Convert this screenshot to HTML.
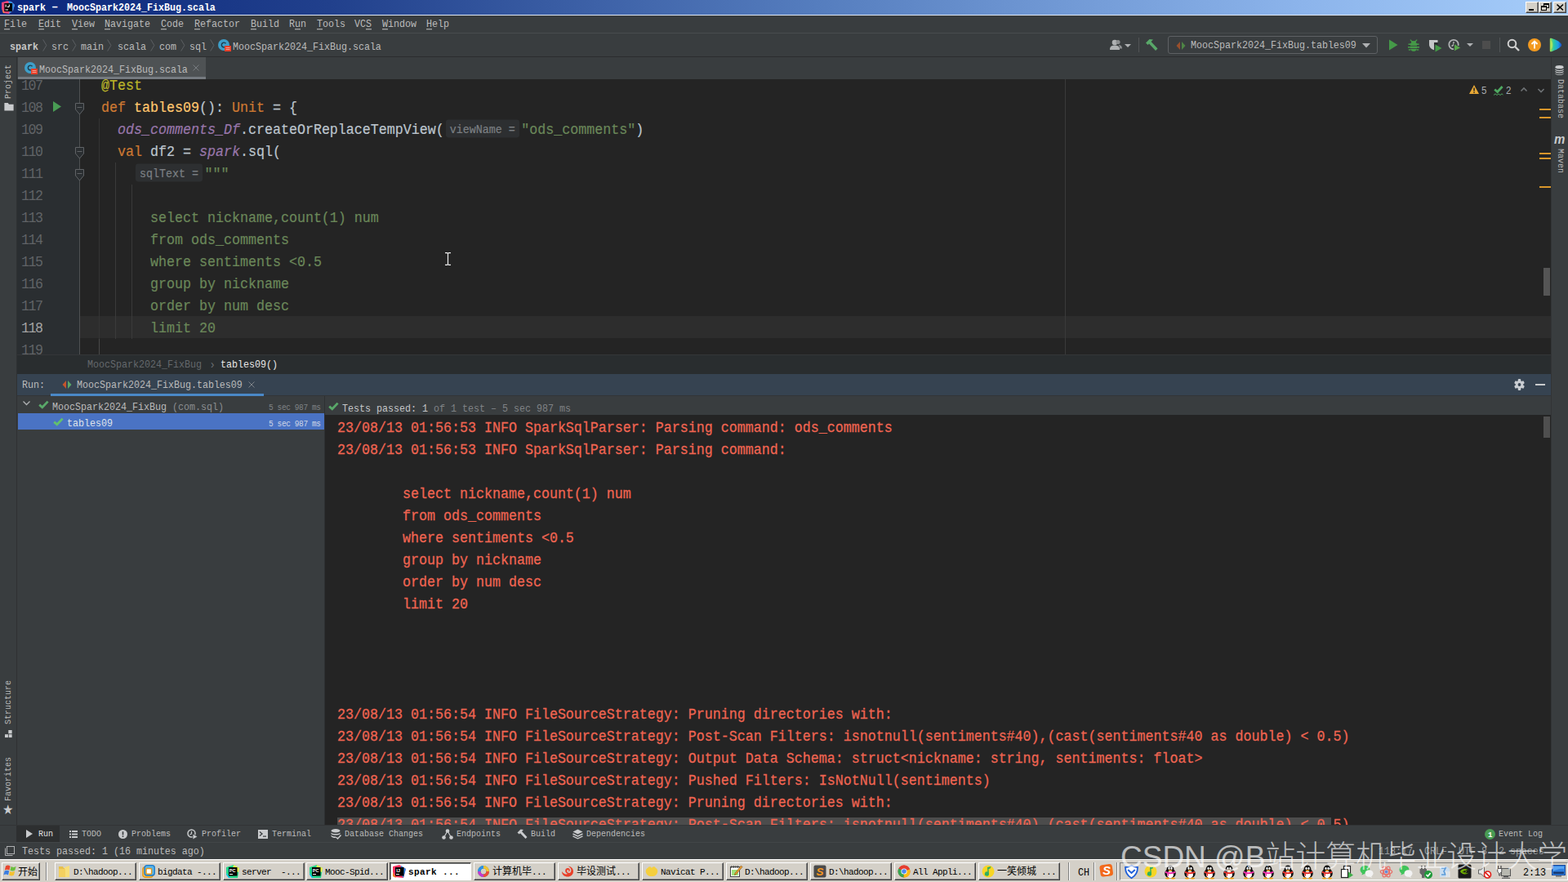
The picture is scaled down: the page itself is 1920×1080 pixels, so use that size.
<!DOCTYPE html><html><head><meta charset="utf-8"><title>spark - MoocSpark2024_FixBug.scala</title><style>
*{box-sizing:border-box;margin:0;padding:0}
html,body{width:1920px;height:1080px;overflow:hidden;background:#393d3f}
body{position:relative;font-family:"Liberation Mono","Noto Sans CJK SC",monospace;font-size:11.67px;color:#bbbbbb;line-height:1}
.a{position:absolute;white-space:pre}
.u{font-size:11.67px;line-height:14px;height:14px;color:#bbbbbb;transform:translateY(1px) scaleY(1.1);transform-origin:0 10px}
.c{-webkit-text-stroke:0.2px;font-size:16.67px;line-height:27px;height:27px;color:#bcc4cd;letter-spacing:0;transform:scaleY(1.1);transform-origin:0 18px}
.ln{font-size:16.67px;line-height:27px;height:27px;color:#606366;letter-spacing:-1.5px;transform:scaleY(1.1);transform-origin:0 18px}
.k{color:#cc7832}.f{color:#ffc66d}.an{color:#bbb529}.s{color:#6a8759}.p{color:#9876aa;font-style:italic}
.r{-webkit-text-stroke:0.25px;font-size:16.67px;line-height:27px;height:27px;color:#f06552;transform:scaleY(1.1);transform-origin:0 18px}
.hint{background:#2d2f31;color:#7b7f83;font-size:13.33px;border-radius:3px;display:inline-block;height:20px;line-height:24.5px;vertical-align:top;margin-top:2px;padding:0 5px;overflow:hidden}
.tb{position:absolute;top:1056px;height:22px;width:100px;background:#d4d0c8;border:1px solid;border-color:#fff #404040 #404040 #fff;box-shadow:inset -1px -1px 0 #808080;color:#000;font-size:11px;letter-spacing:-0.6px;line-height:20px;padding-top:1px;padding-left:22px;white-space:pre;overflow:hidden}
.tb.on{letter-spacing:0.4px;background:#fff;border-color:#404040 #fff #fff #404040;box-shadow:inset 1px 1px 0 #808080;font-weight:bold}
.ic{position:absolute;left:3px;top:3px;width:15px;height:15px;border-radius:2px}
svg{position:absolute;overflow:visible}
u{text-decoration:underline;text-underline-offset:2px}
</style></head><body>
<div class="a" style="left:0px;top:0px;width:1920px;height:18px;background:linear-gradient(90deg,#0a267c 0%,#21408c 21%,#557dbe 52%,#8cb4eb 83%,#a6cdfa 100%);"></div>
<div class="a" style="left:0px;top:18px;width:1920px;height:1px;background:#dfe8f5;"></div>
<div class="a u" style="left:21px;top:2px;color:#fff;font-weight:bold;">spark</div>
<div class="a u" style="left:63px;top:0px;color:#fff;font-weight:bold;font-size:14px">–</div>
<div class="a u" style="left:82px;top:2px;color:#fff;font-weight:bold;">MoocSpark2024_FixBug.scala</div>
<svg class="a" style="left:2px;top:1px" width="16" height="16" viewBox="0 0 16 16"><path d="M0 2 L7 0 L12 1 L16 5 L14 12 L9 16 L2 15 L0 9Z" fill="#e8457a"/><path d="M8 0 L12 1 L16 5 L14 12 L9 16 L11 8Z" fill="#2b8fe8"/><path d="M0 9 L4 15 L2 15Z" fill="#f58a3a"/><rect x="3.3" y="3" width="9.8" height="10" fill="#000"/><rect x="4.5" y="10.5" width="3.5" height="1" fill="#fff"/><rect x="4.6" y="4.5" width="1.1" height="3.2" fill="#fff"/><path d="M7 7 C8 8 9.3 7.6 9.3 6.5 L9.3 4.5" fill="none" stroke="#fff" stroke-width="1.1"/></svg>
<div class="a" style="left:1868px;top:2px;width:16px;height:14px;background:#d4d0c8;border:1px solid;border-color:#fff #404040 #404040 #fff;box-shadow:inset -1px -1px 0 #808080"></div>
<div class="a" style="left:1884px;top:2px;width:16px;height:14px;background:#d4d0c8;border:1px solid;border-color:#fff #404040 #404040 #fff;box-shadow:inset -1px -1px 0 #808080"></div>
<div class="a" style="left:1902px;top:2px;width:16px;height:14px;background:#d4d0c8;border:1px solid;border-color:#fff #404040 #404040 #fff;box-shadow:inset -1px -1px 0 #808080"></div>
<div class="a" style="left:1872px;top:11px;width:6px;height:2px;background:#000;"></div>
<svg style="left:1887px;top:4px" width="10" height="10" viewBox="0 0 10 10"><rect x="3.5" y="0.5" width="6" height="5" fill="none" stroke="#000"/><rect x="3" y="0" width="7" height="2" fill="#000"/><rect x="0.5" y="3.5" width="6" height="5" fill="#d4d0c8" stroke="#000"/><rect x="0" y="3" width="7" height="2" fill="#000"/></svg>
<svg style="left:1905.5px;top:5px" width="9" height="8" viewBox="0 0 9 8"><path d="M0.5 0.5 L8 7.5 M8 0.5 L0.5 7.5" stroke="#000" stroke-width="1.7"/></svg>
<div class="a" style="left:0px;top:19px;width:1920px;height:22px;background:#393d3f;"></div>
<div class="a" style="left:0px;top:40px;width:1920px;height:1px;background:#484c4e;"></div>
<div class="a u" style="left:5px;top:22px;"><u>F</u>ile</div>
<div class="a u" style="left:47px;top:22px;"><u>E</u>dit</div>
<div class="a u" style="left:88px;top:22px;"><u>V</u>iew</div>
<div class="a u" style="left:128px;top:22px;"><u>N</u>avigate</div>
<div class="a u" style="left:197px;top:22px;"><u>C</u>ode</div>
<div class="a u" style="left:238px;top:22px;"><u>R</u>efactor</div>
<div class="a u" style="left:307px;top:22px;"><u>B</u>uild</div>
<div class="a u" style="left:354px;top:22px;">R<u>u</u>n</div>
<div class="a u" style="left:388px;top:22px;"><u>T</u>ools</div>
<div class="a u" style="left:434px;top:22px;">VC<u>S</u></div>
<div class="a u" style="left:468px;top:22px;"><u>W</u>indow</div>
<div class="a u" style="left:522px;top:22px;"><u>H</u>elp</div>
<div class="a" style="left:0px;top:41px;width:1920px;height:28px;background:#393d3f;"></div>
<div class="a" style="left:0px;top:69px;width:1920px;height:1px;background:#2b2d2f;"></div>
<div class="a u" style="left:12px;top:50px;font-weight:bold;color:#c8c8c8">spark</div>
<div class="a u" style="left:63px;top:50px;">src</div>
<div class="a u" style="left:99px;top:50px;">main</div>
<div class="a u" style="left:144px;top:50px;">scala</div>
<div class="a u" style="left:195px;top:50px;">com</div>
<div class="a u" style="left:232px;top:50px;">sql</div>
<svg style="left:52px;top:48px" width="6" height="15" viewBox="0 0 6 16"><path d="M0.5 0.5 L5 8 L0.5 15.5" fill="none" stroke="#5e6164" stroke-width="1"/></svg>
<svg style="left:88px;top:48px" width="6" height="15" viewBox="0 0 6 16"><path d="M0.5 0.5 L5 8 L0.5 15.5" fill="none" stroke="#5e6164" stroke-width="1"/></svg>
<svg style="left:131px;top:48px" width="6" height="15" viewBox="0 0 6 16"><path d="M0.5 0.5 L5 8 L0.5 15.5" fill="none" stroke="#5e6164" stroke-width="1"/></svg>
<svg style="left:184px;top:48px" width="6" height="15" viewBox="0 0 6 16"><path d="M0.5 0.5 L5 8 L0.5 15.5" fill="none" stroke="#5e6164" stroke-width="1"/></svg>
<svg style="left:221px;top:48px" width="6" height="15" viewBox="0 0 6 16"><path d="M0.5 0.5 L5 8 L0.5 15.5" fill="none" stroke="#5e6164" stroke-width="1"/></svg>
<svg style="left:257px;top:48px" width="6" height="15" viewBox="0 0 6 16"><path d="M0.5 0.5 L5 8 L0.5 15.5" fill="none" stroke="#5e6164" stroke-width="1"/></svg>
<svg style="left:267px;top:48px" width="17" height="16" viewBox="0 0 17 16"><circle cx="7" cy="7" r="7" fill="#3e9fc9"/><path d="M9.5 5.2 A2.9 2.9 0 1 0 9.5 8.8" fill="none" stroke="#1d3c4c" stroke-width="1.4"/><rect x="8" y="8" width="8" height="7" fill="#e8402a"/><rect x="9.5" y="10" width="5" height="1" fill="#f7a090"/><rect x="9.5" y="12" width="5" height="1" fill="#f7a090"/></svg>
<div class="a u" style="left:285px;top:50px;">MoocSpark2024_FixBug.scala</div>
<svg style="left:1359px;top:47px" width="28" height="16" viewBox="0 0 28 16"><circle cx="6" cy="5" r="3.3" fill="#afb1b3"/><path d="M0 14 C0 9 3 8.5 6 8.5 C9 8.5 12 9 12 14Z" fill="#afb1b3"/><circle cx="10" cy="4.5" r="2.6" fill="#8c8e90"/><path d="M12 12.5 C12 9 11 8.5 10.5 8 C13 8 15 9 15 12.5Z" fill="#8c8e90"/><path d="M18 7 L26 7 L22 11Z" fill="#afb1b3"/></svg>
<div class="a" style="left:1394px;top:46px;width:1px;height:18px;background:#515456;"></div>
<svg style="left:1402px;top:47px" width="16" height="16" viewBox="0 0 16 16"><path d="M1 5.5 L5.5 1 L10 1.5 L7.5 4 L15.5 12.5 L13 15 L5 6.5 L3.5 8Z" fill="#59a869"/></svg>
<div class="a" style="left:1430px;top:44px;width:257px;height:22px;background:#393d3f;border:1px solid #5e6164;border-radius:3px"></div>
<svg style="left:1440px;top:50px" width="12" height="12" viewBox="0 0 12 12"><path d="M5 1 L5 11 L0.5 6Z" fill="#9a4f2c"/><path d="M7 1 L7 11 L11.5 6Z" fill="#4e8545"/></svg>
<div class="a u" style="left:1458px;top:48px;">MoocSpark2024_FixBug.tables09</div>
<svg style="left:1668px;top:53px" width="10" height="6" viewBox="0 0 10 6"><path d="M0 0 L10 0 L5 5.5Z" fill="#afb1b3"/></svg>
<svg style="left:1700px;top:48px" width="12" height="14" viewBox="0 0 12 14"><path d="M1 0.5 L11.5 7 L1 13.5Z" fill="#459a48"/></svg>
<svg style="left:1724px;top:47px" width="14" height="16" viewBox="0 0 14 16"><g fill="#459a48"><path d="M3.2 1.2 L5.6 3.6 L8.4 3.6 L10.8 1.2 L11.6 2 L9.6 4.2 L4.4 4.2 L2.4 2Z"/><rect x="4" y="3.2" width="6" height="3" rx="1.2"/><rect x="3" y="5.8" width="8" height="3"/><rect x="3" y="9.6" width="8" height="2.6"/><path d="M3 13 L11 13 C10.5 15 8.5 15.8 7 15.8 C5.5 15.8 3.5 15 3 13Z"/><rect x="0.5" y="6.4" width="2.5" height="1.6"/><rect x="11" y="6.4" width="2.5" height="1.6"/><rect x="0" y="10" width="3" height="1.6"/><rect x="11" y="10" width="3" height="1.6"/><rect x="0.8" y="13.2" width="2.4" height="1.5"/><rect x="10.8" y="13.2" width="2.4" height="1.5"/></g></svg>
<svg style="left:1749px;top:47px" width="17" height="17" viewBox="0 0 17 17"><path d="M1 2 L11.5 2 L11.5 5 L7 5 L7 14.2 C3.5 13 1 11 1 7.5Z" fill="#c4c6c8"/><path d="M7 5 L11.5 5 L11.5 8.5 L7 8.5Z" fill="#2b2d2f"/><path d="M8.5 7.5 L16.5 12 L8.5 16.5Z" fill="#459a48"/></svg>
<svg style="left:1773px;top:47px" width="32" height="16" viewBox="0 0 32 16"><circle cx="7" cy="7.5" r="5.7" fill="none" stroke="#afb1b3" stroke-width="1.8"/><path d="M7 4 L7 8 L4.5 9.5" fill="none" stroke="#afb1b3" stroke-width="1.5"/><path d="M7.5 6.5 L16 11.5 L7.5 16Z" fill="#57a64a" stroke="#393d3f" stroke-width="1"/><path d="M23 6 L31 6 L27 10Z" fill="#afb1b3"/></svg>
<div class="a" style="left:1815px;top:50px;width:10px;height:10px;background:#4d4d4d;"></div>
<div class="a" style="left:1836px;top:46px;width:1px;height:18px;background:#515456;"></div>
<svg style="left:1845px;top:47px" width="16" height="16" viewBox="0 0 16 16"><circle cx="6.5" cy="6.5" r="4.8" fill="none" stroke="#d0d0d0" stroke-width="2"/><path d="M10 10 L15 15" stroke="#d0d0d0" stroke-width="2.4"/></svg>
<svg style="left:1871px;top:47px" width="16" height="16" viewBox="0 0 16 16"><circle cx="8" cy="8" r="8" fill="#f39a1f"/><path d="M8 3.5 L8 12.5 M4.5 7 L8 3.5 L11.5 7" fill="none" stroke="#fff" stroke-width="1.8"/></svg>
<svg style="left:1897px;top:46px" width="16" height="18" viewBox="0 0 16 18"><defs><linearGradient id="gp" x1="0" y1="0" x2="1" y2="0"><stop offset="0" stop-color="#a6e04a"/><stop offset="0.35" stop-color="#27c6a8"/><stop offset="0.7" stop-color="#1f9ee8"/><stop offset="1" stop-color="#1b4fc8"/></linearGradient></defs><path d="M2.5 0.8 C1.5 0.5 0.8 1 0.8 2 L0.8 16 C0.8 17 1.5 17.5 2.5 17.2 C8 15.5 14.8 12 15.2 9 C14.8 6 8 2.5 2.5 0.8Z" fill="url(#gp)"/><path d="M2 3 C5 6 5 12 2 15Z" fill="#d8ee5a" opacity="0.55"/></svg>
<div class="a" style="left:0px;top:70px;width:20px;height:961px;background:#393d3f;"></div>
<div class="a" style="left:20px;top:70px;width:1px;height:961px;background:#2f3133;"></div>
<div class="a" style="left:1900px;top:70px;width:20px;height:961px;background:#393d3f;"></div>
<div class="a" style="left:1899px;top:70px;width:1px;height:961px;background:#323436;"></div>
<div class="a u" style="left:11px;top:100px;transform:translate(-50%,-50%) rotate(-90deg) scaleY(1.1);transform-origin:50% 50%;font-size:10px;color:#bbbbbb">Project</div>
<svg style="left:4.5px;top:126px" width="12" height="9.5" viewBox="0 0 13 11"><path d="M0 0 L5 0 L6.5 2 L13 2 L13 11 L0 11Z" fill="#c9cbcd"/></svg>
<div class="a u" style="left:11px;top:860px;transform:translate(-50%,-50%) rotate(-90deg) scaleY(1.1);transform-origin:50% 50%;font-size:10px;color:#bbbbbb">Structure</div>
<svg style="left:6px;top:894px" width="9.5" height="9.5" viewBox="0 0 11 11"><rect x="5" y="0" width="5" height="5" fill="#c9cbcd"/><rect x="0" y="6" width="4.5" height="4.5" fill="#c9cbcd"/><rect x="5.5" y="6" width="4.5" height="4.5" fill="#c9cbcd"/></svg>
<div class="a u" style="left:11px;top:954px;transform:translate(-50%,-50%) rotate(-90deg) scaleY(1.1);transform-origin:50% 50%;font-size:10px;color:#bbbbbb">Favorites</div>
<div class="a u" style="left:3px;top:984px;font-size:15px;color:#c9cbcd;font-family:'DejaVu Sans',sans-serif">★</div>
<div class="a u" style="left:1909.5px;top:121px;transform:translate(-50%,-50%) rotate(90deg) scaleY(1.1);transform-origin:50% 50%;font-size:10px;color:#bbbbbb">Database</div>
<svg style="left:1904px;top:80px" width="11" height="12" viewBox="0 0 13 14"><ellipse cx="6.5" cy="2.5" rx="6" ry="2.5" fill="#c9cbcd"/><path d="M0.5 5 C2 7.5 11 7.5 12.5 5 L12.5 6.5 C11 9 2 9 0.5 6.5Z M0.5 8 C2 10.5 11 10.5 12.5 8 L12.5 9.5 C11 12 2 12 0.5 9.5Z M0.5 11 C2 13.5 11 13.5 12.5 11 L12.5 12 C11 14.5 2 14.5 0.5 12Z" fill="#c9cbcd"/></svg>
<div class="a u" style="left:1903px;top:163px;font-size:15px;font-style:italic;font-weight:bold;color:#c9cbcd;font-family:'Liberation Sans',sans-serif">m</div>
<div class="a u" style="left:1909.5px;top:197px;transform:translate(-50%,-50%) rotate(90deg) scaleY(1.1);transform-origin:50% 50%;font-size:10px;color:#bbbbbb">Maven</div>
<div class="a" style="left:21px;top:70px;width:1878px;height:27px;background:#393d3f;"></div>
<div class="a" style="left:22px;top:70px;width:230px;height:27px;background:#4e5254;"></div>
<div class="a" style="left:22px;top:94px;width:230px;height:3px;background:#757a80;"></div>
<svg style="left:30px;top:76px" width="17" height="16" viewBox="0 0 17 16"><circle cx="7" cy="7" r="7" fill="#3e9fc9"/><path d="M9.5 5.2 A2.9 2.9 0 1 0 9.5 8.8" fill="none" stroke="#1d3c4c" stroke-width="1.4"/><rect x="8" y="8" width="8" height="7" fill="#e8402a"/><rect x="9.5" y="10" width="5" height="1" fill="#f7a090"/><rect x="9.5" y="12" width="5" height="1" fill="#f7a090"/></svg>
<div class="a u" style="left:48px;top:78px;">MoocSpark2024_FixBug.scala</div>
<svg style="left:236px;top:79px" width="8" height="8" viewBox="0 0 8 8"><path d="M0.5 0.5 L7.5 7.5 M7.5 0.5 L0.5 7.5" stroke="#787c80" stroke-width="1"/></svg>
<div class="a" style="left:21px;top:97px;width:1878px;height:337px;background:#242424;"></div>
<div class="a" style="left:21px;top:97px;width:76px;height:337px;background:#2a2e31;"></div>
<div class="a" style="left:97px;top:97px;width:1px;height:337px;background:#4f5153;"></div>
<div class="a" style="left:98px;top:387px;width:1801px;height:27px;background:#2d2d2d;"></div>
<div class="a" style="left:1304px;top:97px;width:1px;height:337px;background:#3a3a3a;"></div>
<div class="a" style="left:121px;top:145px;width:1px;height:270px;background:#343434;"></div>
<div class="a" style="left:121px;top:415px;width:1px;height:19px;background:#484848;"></div>
<div class="a" style="left:141px;top:199px;width:1px;height:216px;background:#3a3a3a;"></div>
<div class="a" style="left:161px;top:226px;width:1px;height:189px;background:#3a3a3a;"></div>
<div class="a" style="left:22px;top:97px;width:1876px;height:337px;overflow:hidden">
<div class="a ln" style="left:4px;top:-5px;color:#606366">107</div>
<div class="a c" style="left:62px;top:-5px">    <span class="an">@Test</span></div>
<div class="a ln" style="left:4px;top:22px;color:#606366">108</div>
<div class="a c" style="left:62px;top:22px">    <span class="k">def</span> <span class="f">tables09</span>(): <span class="k">Unit</span> = {</div>
<div class="a ln" style="left:4px;top:49px;color:#606366">109</div>
<div class="a c" style="left:62px;top:49px">      <span class="p">ods_comments_Df</span>.createOrReplaceTempView(<span class="hint" style="margin-left:2px;margin-right:2.5px">viewName =</span><span class="s">"ods_comments"</span>)</div>
<div class="a ln" style="left:4px;top:76px;color:#606366">110</div>
<div class="a c" style="left:62px;top:76px">      <span class="k">val</span> df2 = <span class="p">spark</span>.sql(</div>
<div class="a ln" style="left:4px;top:103px;color:#606366">111</div>
<div class="a c" style="left:62px;top:103px">        <span class="hint" style="margin-left:2px;margin-right:2.5px">sqlText =</span><span class="s">"""</span></div>
<div class="a ln" style="left:4px;top:130px;color:#606366">112</div>
<div class="a ln" style="left:4px;top:157px;color:#606366">113</div>
<div class="a c" style="left:62px;top:157px">          <span class="s">select nickname,count(1) num</span></div>
<div class="a ln" style="left:4px;top:184px;color:#606366">114</div>
<div class="a c" style="left:62px;top:184px">          <span class="s">from ods_comments</span></div>
<div class="a ln" style="left:4px;top:211px;color:#606366">115</div>
<div class="a c" style="left:62px;top:211px">          <span class="s">where sentiments &lt;0.5</span></div>
<div class="a ln" style="left:4px;top:238px;color:#606366">116</div>
<div class="a c" style="left:62px;top:238px">          <span class="s">group by nickname</span></div>
<div class="a ln" style="left:4px;top:265px;color:#606366">117</div>
<div class="a c" style="left:62px;top:265px">          <span class="s">order by num desc</span></div>
<div class="a ln" style="left:4px;top:292px;color:#a4a3a3">118</div>
<div class="a c" style="left:62px;top:292px">          <span class="s">limit 20</span></div>
<div class="a ln" style="left:4px;top:319px;color:#606366">119</div>
</div>
<svg style="left:65px;top:124px" width="10" height="13" viewBox="0 0 10 13"><path d="M0 0 L10 6.5 L0 13Z" fill="#499c54"/></svg>
<svg style="left:92px;top:126px" width="11" height="15" viewBox="0 0 11 15"><path d="M0.5 0.5 L10.5 0.5 L10.5 8 L5.5 14 L0.5 8Z" fill="#2a2e31" stroke="#606366" stroke-width="1"/><path d="M2.5 5.5 L8.5 5.5" stroke="#606366" stroke-width="1"/></svg>
<svg style="left:92px;top:180px" width="11" height="15" viewBox="0 0 11 15"><path d="M0.5 0.5 L10.5 0.5 L10.5 8 L5.5 14 L0.5 8Z" fill="#2a2e31" stroke="#606366" stroke-width="1"/><path d="M2.5 5.5 L8.5 5.5" stroke="#606366" stroke-width="1"/></svg>
<svg style="left:92px;top:207px" width="11" height="15" viewBox="0 0 11 15"><path d="M0.5 0.5 L10.5 0.5 L10.5 8 L5.5 14 L0.5 8Z" fill="#2a2e31" stroke="#606366" stroke-width="1"/><path d="M2.5 5.5 L8.5 5.5" stroke="#606366" stroke-width="1"/></svg>
<svg style="left:1799px;top:104px" width="12" height="11" viewBox="0 0 12 11"><path d="M6 0 L12 11 L0 11Z" fill="#e8a835"/><rect x="5.3" y="3.5" width="1.5" height="4" fill="#242424"/><rect x="5.3" y="8.5" width="1.5" height="1.4" fill="#242424"/></svg>
<div class="a u" style="left:1814px;top:103px;font-size:11.5px;font-family:'Liberation Sans',sans-serif;color:#a9adb1">5</div>
<svg style="left:1829px;top:104px" width="12" height="13" viewBox="0 0 12 13"><path d="M1.2 5.5 L4.6 8.5 L10.6 2" fill="none" stroke="#4fa861" stroke-width="2.8"/><path d="M0 12.5 L2 10.8 L4 12.5 L6 10.8 L8 12.5 L10 10.8 L11.5 12" fill="none" stroke="#4fa861" stroke-width="1"/></svg>
<div class="a u" style="left:1844px;top:103px;font-size:11.5px;font-family:'Liberation Sans',sans-serif;color:#a9adb1">2</div>
<svg style="left:1862px;top:107px" width="8" height="5.5" viewBox="0 0 9 6"><path d="M0.5 5 L4.5 1 L8.5 5" fill="none" stroke="#6e7275" stroke-width="1.8"/></svg>
<svg style="left:1883px;top:108px" width="8" height="5.5" viewBox="0 0 9 6"><path d="M0.5 1 L4.5 5 L8.5 1" fill="none" stroke="#6e7275" stroke-width="1.8"/></svg>
<div class="a" style="left:1885px;top:133px;width:14px;height:2px;background:#d9962b;"></div>
<div class="a" style="left:1885px;top:143px;width:14px;height:2px;background:#d9962b;"></div>
<div class="a" style="left:1885px;top:187px;width:14px;height:2px;background:#d9962b;"></div>
<div class="a" style="left:1885px;top:193px;width:14px;height:2px;background:#d9962b;"></div>
<div class="a" style="left:1885px;top:228px;width:14px;height:2px;background:#d9962b;"></div>
<div class="a" style="left:1890px;top:328px;width:8px;height:34px;background:#555555;"></div>
<svg style="left:545px;top:309px" width="7" height="16" viewBox="0 0 7 16"><path d="M0 0.7 L2.6 0.7 L3.5 1.6 L4.4 0.7 L7 0.7 M3.5 1.6 L3.5 14.4 M0 15.3 L2.6 15.3 L3.5 14.4 L4.4 15.3 L7 15.3" fill="none" stroke="#ececec" stroke-width="1.2"/></svg>
<div class="a" style="left:21px;top:434px;width:1878px;height:24px;background:#292d2f;"></div>
<div class="a" style="left:21px;top:434px;width:1878px;height:1px;background:#343638;"></div>
<div class="a u" style="left:107px;top:439px;color:#64686c">MoocSpark2024_FixBug</div>
<div class="a u" style="left:258px;top:439px;color:#6f7377;font-family:'Liberation Sans',sans-serif;font-size:13px">›</div>
<div class="a u" style="left:270px;top:439px;color:#e6e6e6">tables09()</div>
<div class="a" style="left:21px;top:458px;width:1878px;height:27px;background:#364351;"></div>
<div class="a" style="left:21px;top:484px;width:1878px;height:1px;background:#323436;"></div>
<div class="a u" style="left:27px;top:464px;">Run:</div>
<svg style="left:76px;top:465px" width="12" height="12" viewBox="0 0 12 12"><path d="M5 1 L5 11 L0.5 6Z" fill="#c4552d"/><path d="M7 1 L7 11 L11.5 6Z" fill="#59a869"/></svg>
<div class="a u" style="left:94px;top:464px;">MoocSpark2024_FixBug.tables09</div>
<svg style="left:304px;top:467px" width="8" height="8" viewBox="0 0 8 8"><path d="M0.5 0.5 L7.5 7.5 M7.5 0.5 L0.5 7.5" stroke="#7d8288" stroke-width="1"/></svg>
<div class="a" style="left:62px;top:482px;width:261px;height:3px;background:#4a88c7;"></div>
<svg style="left:1853.5px;top:464px" width="13" height="14" viewBox="0 0 14 14" preserveAspectRatio="none"><g fill="#c9cdd2"><circle cx="7" cy="7" r="5.1"/><rect x="5.1" y="0.1" width="3.8" height="13.8" rx="1"/><rect x="5.1" y="0.1" width="3.8" height="13.8" rx="1" transform="rotate(60 7 7)"/><rect x="5.1" y="0.1" width="3.8" height="13.8" rx="1" transform="rotate(120 7 7)"/></g><circle cx="7" cy="7" r="2" fill="#364351"/></svg>
<div class="a" style="left:1880px;top:470px;width:12px;height:2px;background:#c9cbcd;"></div>
<div class="a" style="left:21px;top:485px;width:376px;height:525px;background:#393d3f;"></div>
<div class="a" style="left:397px;top:485px;width:1px;height:525px;background:#2e3032;"></div>
<div class="a" style="left:398px;top:485px;width:1501px;height:23px;background:#393d3f;"></div>
<div class="a" style="left:398px;top:508px;width:1501px;height:502px;background:#242424;"></div>
<svg style="left:28px;top:491px" width="9" height="6" viewBox="0 0 9 6"><path d="M0.5 0.5 L4.5 4.5 L8.5 0.5" fill="none" stroke="#aeb0b2" stroke-width="1.3"/></svg>
<svg style="left:47px;top:490px" width="13" height="11" viewBox="0 0 13 11"><path d="M1.2 5.6 L4.8 8.8 L11.6 1.6" fill="none" stroke="#59a869" stroke-width="2.8"/></svg>
<div class="a u" style="left:64px;top:491px;">MoocSpark2024_FixBug</div>
<div class="a u" style="left:211px;top:491px;color:#8a8d8f">(com.sql)</div>
<div class="a u" style="left:329px;top:492px;font-size:9.5px;color:#7f8285;letter-spacing:-0.4px">5 sec 987 ms</div>
<div class="a" style="left:22px;top:506px;width:375px;height:20px;background:#4a73c4;"></div>
<svg style="left:65px;top:511px" width="13" height="11" viewBox="0 0 13 11"><path d="M1.2 5.6 L4.8 8.8 L11.6 1.6" fill="none" stroke="#62c06e" stroke-width="2.8"/></svg>
<div class="a u" style="left:82px;top:511px;color:#dfe3ea">tables09</div>
<div class="a u" style="left:329px;top:512px;font-size:9.5px;color:#cfd6e6;letter-spacing:-0.4px">5 sec 987 ms</div>
<svg style="left:402px;top:492px" width="13" height="11" viewBox="0 0 13 11"><path d="M1.2 5.6 L4.8 8.8 L11.6 1.6" fill="none" stroke="#59a869" stroke-width="2.8"/></svg>
<div class="a u" style="left:419px;top:493px;color:#c4c6c8">Tests passed: 1</div>
<div class="a u" style="left:531px;top:493px;color:#7f8285">of 1 test – 5 sec 987 ms</div>
<div class="a" style="left:398px;top:508px;width:1500px;height:502px;overflow:hidden">
<div class="a" style="left:15px;top:493px;width:1217px;height:9px;background:#4c4c4c"></div>
<div class="a r" style="left:15px;top:3px">23/08/13 01:56:53 INFO SparkSqlParser: Parsing command: ods_comments</div>
<div class="a r" style="left:15px;top:30px">23/08/13 01:56:53 INFO SparkSqlParser: Parsing command: </div>
<div class="a r" style="left:15px;top:84px">        select nickname,count(1) num</div>
<div class="a r" style="left:15px;top:111px">        from ods_comments</div>
<div class="a r" style="left:15px;top:138px">        where sentiments &lt;0.5</div>
<div class="a r" style="left:15px;top:165px">        group by nickname</div>
<div class="a r" style="left:15px;top:192px">        order by num desc</div>
<div class="a r" style="left:15px;top:219px">        limit 20</div>
<div class="a r" style="left:15px;top:354px">23/08/13 01:56:54 INFO FileSourceStrategy: Pruning directories with: </div>
<div class="a r" style="left:15px;top:381px">23/08/13 01:56:54 INFO FileSourceStrategy: Post-Scan Filters: isnotnull(sentiments#40),(cast(sentiments#40 as double) &lt; 0.5)</div>
<div class="a r" style="left:15px;top:408px">23/08/13 01:56:54 INFO FileSourceStrategy: Output Data Schema: struct&lt;nickname: string, sentiments: float&gt;</div>
<div class="a r" style="left:15px;top:435px">23/08/13 01:56:54 INFO FileSourceStrategy: Pushed Filters: IsNotNull(sentiments)</div>
<div class="a r" style="left:15px;top:462px">23/08/13 01:56:54 INFO FileSourceStrategy: Pruning directories with: </div>
<div class="a r" style="left:15px;top:489px">23/08/13 01:56:54 INFO FileSourceStrategy: Post-Scan Filters: isnotnull(sentiments#40),(cast(sentiments#40 as double) &lt; 0.5)</div>
</div>
<div class="a" style="left:1890px;top:510px;width:8px;height:26px;background:#4f4f4f;"></div>
<div class="a" style="left:0px;top:1010px;width:1920px;height:21px;background:#393d3f;"></div>
<div class="a" style="left:0px;top:1010px;width:1920px;height:1px;background:#323436;"></div>
<div class="a" style="left:20px;top:1011px;width:53px;height:20px;background:#2d2f30;"></div>
<div class="a u" style="left:47px;top:1014px;font-size:10px;color:#e0e0e0">Run</div>
<div class="a u" style="left:100px;top:1014px;font-size:10px;">TODO</div>
<div class="a u" style="left:161px;top:1014px;font-size:10px;">Problems</div>
<div class="a u" style="left:247px;top:1014px;font-size:10px;">Profiler</div>
<div class="a u" style="left:333px;top:1014px;font-size:10px;">Terminal</div>
<div class="a u" style="left:422px;top:1014px;font-size:10px;">Database Changes</div>
<div class="a u" style="left:559px;top:1014px;font-size:10px;">Endpoints</div>
<div class="a u" style="left:650px;top:1014px;font-size:10px;">Build</div>
<div class="a u" style="left:718px;top:1014px;font-size:10px;">Dependencies</div>
<svg style="left:32px;top:1016px" width="8" height="10" viewBox="0 0 8 10"><path d="M0 0 L8 5 L0 10Z" fill="#c9cbcd"/></svg>
<svg style="left:85px;top:1017px" width="10" height="9" viewBox="0 0 10 9"><g fill="#c9cbcd"><rect x="0" y="0" width="2" height="2"/><rect x="3" y="0" width="7" height="2"/><rect x="0" y="3.5" width="2" height="2"/><rect x="3" y="3.5" width="7" height="2"/><rect x="0" y="7" width="2" height="2"/><rect x="3" y="7" width="7" height="2"/></g></svg>
<svg style="left:145px;top:1016px" width="11" height="11" viewBox="0 0 11 11"><circle cx="5.5" cy="5.5" r="5.5" fill="#c9cbcd"/><rect x="4.7" y="2.2" width="1.6" height="4.2" fill="#393d3f"/><rect x="4.7" y="7.4" width="1.6" height="1.6" fill="#393d3f"/></svg>
<svg style="left:229px;top:1015px" width="14" height="13" viewBox="0 0 14 13"><circle cx="5.5" cy="5.5" r="4.5" fill="none" stroke="#c9cbcd" stroke-width="1.5"/><path d="M5.5 3 L5.5 6 L3.5 7" fill="none" stroke="#c9cbcd" stroke-width="1.2"/><path d="M7 6 L13 9.5 L7 13Z" fill="#c9cbcd" stroke="#393d3f" stroke-width="0.8"/></svg>
<svg style="left:316px;top:1016px" width="12" height="11" viewBox="0 0 12 11"><rect x="0" y="0" width="12" height="11" fill="#c9cbcd"/><path d="M2 2.5 L5 5 L2 7.5" fill="none" stroke="#393d3f" stroke-width="1.3"/><rect x="6" y="7.5" width="4" height="1.2" fill="#393d3f"/></svg>
<svg style="left:405px;top:1015px" width="13" height="13" viewBox="0 0 13 13"><ellipse cx="6" cy="2.2" rx="5.5" ry="2.2" fill="#c9cbcd"/><path d="M0.5 4.5 C2 6.5 10 6.5 11.5 4.5 L11.5 6 C10 8 2 8 0.5 6Z M0.5 7.5 C2 9.5 5 9.5 6 9.3 L6 11 C4 11.2 1.5 10.5 0.5 9Z" fill="#c9cbcd"/><path d="M6.5 10 L8.5 12 L12.5 7.5" fill="none" stroke="#c9cbcd" stroke-width="1.5"/></svg>
<svg style="left:541px;top:1015px" width="14" height="13" viewBox="0 0 14 13"><g fill="#c9cbcd"><circle cx="7" cy="2.5" r="2.3"/><circle cx="2.5" cy="10.5" r="2.3"/><circle cx="11.5" cy="10.5" r="2.3"/></g><path d="M7 2.5 L2.5 10.5 M7 2.5 L11.5 10.5" stroke="#c9cbcd" stroke-width="1.2"/></svg>
<svg style="left:633px;top:1015px" width="13" height="13" viewBox="0 0 13 13"><path d="M0.5 4.5 L4.5 0.5 L8 1 L6 3 L12.5 10 L10.5 12 L4 5.2 L2.8 6.5Z" fill="#c9cbcd"/></svg>
<svg style="left:701px;top:1015px" width="13" height="13" viewBox="0 0 13 13"><path d="M6.5 0.5 L12.5 3.5 L6.5 6.5 L0.5 3.5Z" fill="#c9cbcd"/><path d="M0.5 6 L6.5 9 L12.5 6 M0.5 8.8 L6.5 11.8 L12.5 8.8" fill="none" stroke="#c9cbcd" stroke-width="1.4"/></svg>
<svg style="left:1818px;top:1015px" width="13" height="13" viewBox="0 0 13 13"><circle cx="6.5" cy="6.5" r="6.5" fill="#499c54"/></svg>
<div class="a u" style="left:1822px;top:1017px;font-size:9px;color:#fff;font-weight:bold;line-height:10px;height:10px">1</div>
<div class="a u" style="left:1835px;top:1014px;font-size:10px">Event Log</div>
<div class="a" style="left:0px;top:1031px;width:1920px;height:21px;background:#393d3f;"></div>
<div class="a" style="left:0px;top:1031px;width:1920px;height:1px;background:#424648;"></div>
<svg style="left:6px;top:1036px" width="12" height="12" viewBox="0 0 12 12"><rect x="2.5" y="0.5" width="9" height="9" fill="none" stroke="#aeb0b2"/><path d="M0.5 2.5 L0.5 11.5 L9.5 11.5" fill="none" stroke="#aeb0b2"/></svg>
<div class="a u" style="left:27px;top:1035px;">Tests passed: 1 (16 minutes ago)</div>
<div class="a u" style="left:1688px;top:1035px;color:#9a9da0">118:17  CRLF  UTF-8  2 spaces</div>
<div class="a" style="left:0px;top:1052px;width:1920px;height:28px;background:#d4d0c8;"></div>
<div class="a" style="left:0px;top:1052px;width:1920px;height:1px;background:#ffffff;"></div>
<div class="tb" style="left:2px;width:47px;padding-left:19px;padding-top:1.5px;font-size:12px;letter-spacing:0;font-family:'Liberation Mono','Noto Sans CJK SC',monospace">开始</div>
<svg style="left:5px;top:1058px" width="16" height="16" viewBox="0 0 16 16"><path d="M2 2.5 C4 1 6 1.5 7.6 2.7 L6.4 7.6 C4.6 6.4 2.8 6.4 0.8 7.6Z" fill="#e8462d"/><path d="M8.6 3.1 C10.4 4.3 12.4 4.1 14.6 2.7 L13.4 7.6 C11.2 9 9.2 8.8 7.4 7.8Z" fill="#6bbf3e"/><path d="M0.6 8.6 C2.6 7.4 4.4 7.4 6.2 8.6 L5 13.4 C3.2 12.2 1.4 12.2 -0.6 13.4Z" fill="#3a7de0"/><path d="M7.2 8.9 C9 10 11 10 13.2 8.6 L12 13.4 C9.8 14.8 7.8 14.6 6 13.6Z" fill="#f5c131"/></svg>
<div class="a" style="left:56px;top:1056px;width:2px;height:22px;background:#d4d0c8;border-left:1px solid #808080;border-right:1px solid #fff"></div>
<div class="tb" style="left:67px">D:\hadoop...</div>
<svg style="left:71px;top:1059px" width="16" height="16" viewBox="0 0 16 16"><path d="M1 2 L6 2 L7 4 L14 4 L14 15 L1 15Z" fill="#e8c04a"/><path d="M8 3 L14 1 L14 15 L8 15Z" fill="#f7de7a"/><path d="M1 5 L9 5 L9 15 L1 15Z" fill="#f3d060"/></svg>
<div class="tb" style="left:170px">bigdata -...</div>
<svg style="left:174px;top:1059px" width="16" height="16" viewBox="0 0 16 16"><rect x="0.8" y="2.8" width="12.4" height="12.4" rx="3" fill="#f6c050" stroke="#e89a1a" stroke-width="1.4"/><rect x="3" y="0.7" width="12.3" height="12.3" rx="3" fill="#5ab4e8" stroke="#1a78c8" stroke-width="1.3"/><rect x="5" y="4.6" width="6.6" height="6.6" rx="1.3" fill="#fff" stroke="#e89a1a" stroke-width="1.5"/></svg>
<div class="tb" style="left:273px">server  -...</div>
<svg style="left:277px;top:1059px" width="16" height="16" viewBox="0 0 16 16"><path d="M0 3 L9 0 L16 4 L14 16 L3 16 L0 10Z" fill="#21d789"/><path d="M9 0 L16 4 L15 9 L8 6Z" fill="#fcf84a"/><path d="M0 10 L5 16 L3 16 L0 12Z" fill="#07c3f2"/><rect x="3" y="3" width="10.5" height="10.5" fill="#000"/><text x="3.8" y="8.6" font-family="Liberation Sans,sans-serif" font-weight="bold" font-size="5.6" fill="#fff">PC</text><rect x="4" y="11" width="4" height="1" fill="#fff"/></svg>
<div class="tb" style="left:375px">Mooc-Spid...</div>
<svg style="left:379px;top:1059px" width="16" height="16" viewBox="0 0 16 16"><path d="M0 3 L9 0 L16 4 L14 16 L3 16 L0 10Z" fill="#21d789"/><path d="M9 0 L16 4 L15 9 L8 6Z" fill="#fcf84a"/><path d="M0 10 L5 16 L3 16 L0 12Z" fill="#07c3f2"/><rect x="3" y="3" width="10.5" height="10.5" fill="#000"/><text x="3.8" y="8.6" font-family="Liberation Sans,sans-serif" font-weight="bold" font-size="5.6" fill="#fff">PC</text><rect x="4" y="11" width="4" height="1" fill="#fff"/></svg>
<div class="tb on" style="left:477px">spark ...</div>
<svg style="left:481px;top:1059px" width="16" height="16" viewBox="0 0 16 16"><path d="M0 2 L8 0 L16 5 L13 16 L3 15 L0 9Z" fill="#fe315d"/><path d="M10 1 L16 5 L13 16 L9 10Z" fill="#2b8ff0"/><path d="M0 9 L4 16 L0 14Z" fill="#f97a12"/><rect x="3" y="3" width="10.5" height="10.5" fill="#000"/><text x="4.2" y="8.8" font-family="Liberation Sans,sans-serif" font-weight="bold" font-size="5.8" fill="#fff">IJ</text><rect x="4" y="11" width="4" height="1" fill="#fff"/></svg>
<div class="tb" style="left:580px"><span style="font-size:12px;letter-spacing:0">计算机毕</span>...</div>
<svg style="left:584px;top:1059px" width="16" height="16" viewBox="0 0 16 16"><circle cx="8" cy="8" r="5.2" fill="none" stroke="#35b558" stroke-width="3.6"/><path d="M8 2.8 A5.2 5.2 0 0 1 13.2 8" fill="none" stroke="#f5c131" stroke-width="3.6"/><path d="M13.2 8 A5.2 5.2 0 0 1 8 13.2" fill="none" stroke="#ee4a3a" stroke-width="3.6"/><path d="M8 13.2 A5.2 5.2 0 0 1 2.8 8" fill="none" stroke="#c43ad0" stroke-width="3.6"/><path d="M2.8 8 A5.2 5.2 0 0 1 8 2.8" fill="none" stroke="#2f8fe8" stroke-width="3.6"/></svg>
<div class="tb" style="left:683px"><span style="font-size:12px;letter-spacing:0">毕设测试</span>...</div>
<svg style="left:687px;top:1059px" width="16" height="16" viewBox="0 0 16 16"><path d="M8 1.5 C12.5 1.5 15 4.5 15 8 C15 12 12 14.5 8 14.5 C4.5 14.5 1 12.5 1 8 C3 11 6 12 8 11 C5.5 10 4.5 7.5 5.5 5.5 C6.5 3.5 9.5 3.5 10.5 5 C11.5 6.5 10.5 8.5 9 8.5 C10 7 9 5.5 8 6 C6.5 7 7.5 10 10 10 C12.5 9.5 13 6 11.5 4 C10.5 2.5 9 1.8 8 1.5Z" fill="#e8402a"/></svg>
<div class="tb" style="left:786px">Navicat P...</div>
<svg style="left:790px;top:1059px" width="16" height="16" viewBox="0 0 16 16"><path d="M3 4 C4.5 1.5 7 2 8 4 C9 2 12 1.5 13 4 C16 5 16 10 13 12.5 C11 14.5 5 14.5 3 12.5 C0 10 0 5 3 4Z" fill="#f5cf3e"/></svg>
<div class="tb" style="left:889px">D:\hadoop...</div>
<svg style="left:893px;top:1059px" width="16" height="16" viewBox="0 0 16 16"><rect x="1.5" y="2.5" width="11" height="12" fill="#fff" stroke="#444" stroke-width="1"/><path d="M3 1 L3 4 M5.5 1 L5.5 4 M8 1 L8 4 M10.5 1 L10.5 4" stroke="#444" stroke-width="1"/><rect x="3" y="6" width="8" height="7" fill="#9fe07a"/><path d="M14.5 1 L16 2.5 L8.5 11.5 L6.5 12.5 L7 10.3Z" fill="#f0a030" stroke="#7a4a10" stroke-width="0.6"/></svg>
<div class="tb" style="left:992px">D:\hadoop...</div>
<svg style="left:996px;top:1059px" width="16" height="16" viewBox="0 0 16 16"><rect x="0.5" y="0.5" width="15" height="15" rx="2" fill="#4a4a4a"/><text x="3.6" y="13" font-family="Liberation Sans,sans-serif" font-weight="bold" font-style="italic" font-size="13.5" fill="#f89820">S</text></svg>
<div class="tb" style="left:1095px">All Appli...</div>
<svg style="left:1099px;top:1059px" width="16" height="16" viewBox="0 0 16 16"><circle cx="8" cy="8" r="7.5" fill="#e53e30"/><path d="M8 8 L1.5 4.3 A7.5 7.5 0 0 0 7.6 15.5Z" fill="#36a852"/><path d="M8 8 L7.6 15.5 A7.5 7.5 0 0 0 15 5.2Z" fill="#f9bc15"/><path d="M8 8 L15 5.2 A7.5 7.5 0 0 0 1.5 4.3Z" fill="#e53e30"/><circle cx="8" cy="8" r="3.6" fill="#fff"/><circle cx="8" cy="8" r="2.8" fill="#4a8af4"/></svg>
<div class="tb" style="left:1198px"><span style="font-size:12px;letter-spacing:0">一笑倾城</span> ...</div>
<svg style="left:1202px;top:1059px" width="16" height="16" viewBox="0 0 16 16"><circle cx="8" cy="8" r="7.5" fill="#f7d524"/><path d="M7 3 L11.5 2 L10.5 4.5 L8.5 5 L9 11 A2.6 2.6 0 1 1 7.3 8.6Z" fill="#2fae5e"/></svg>
<div class="a" style="left:1308px;top:1056px;width:2px;height:22px;background:#d4d0c8;border-left:1px solid #808080;border-right:1px solid #fff"></div>
<div class="a u" style="left:1320px;top:1061px;color:#000">CH</div>
<div class="a" style="left:1339px;top:1056px;width:2px;height:22px;background:#d4d0c8;border-left:1px solid #808080;border-right:1px solid #fff"></div>
<svg style="left:1346px;top:1057px" width="18" height="18" viewBox="0 0 18 18"><rect x="1" y="1.5" width="15.5" height="14.5" rx="3.5" fill="#f26a1b" transform="rotate(-8 9 9)"/><text x="4.2" y="14" font-family="Liberation Sans,sans-serif" font-weight="bold" font-style="italic" font-size="14.5" fill="#fff">S</text></svg>
<div class="a" style="left:1367px;top:1056px;width:2px;height:22px;background:#d4d0c8;border-left:1px solid #808080;border-right:1px solid #fff"></div>
<div class="a" style="left:1371px;top:1056px;width:549px;height:22px;background:#d4d0c8;border:1px solid;border-color:#808080 #fff #fff #808080"></div>
<svg style="left:1377px;top:1059px" width="17" height="17" viewBox="0 0 17 17"><path d="M8.5 0.8 C11 2.6 13.5 3 16 3 C16 9.5 13.5 13.5 8.5 16.2 C3.5 13.5 1 9.5 1 3 C3.5 3 6 2.6 8.5 0.8Z" fill="#fff" stroke="#1f5fd8" stroke-width="1.8"/><path d="M4.2 6 L8.5 10 L12.8 6" fill="none" stroke="#1f5fd8" stroke-width="2"/></svg>
<svg style="left:1401px;top:1059px" width="16" height="16" viewBox="0 0 16 16"><circle cx="8" cy="8" r="7.5" fill="#f7d524"/><path d="M7 3 L11.5 2 L10.5 4.5 L8.5 5 L9 11 A2.6 2.6 0 1 1 7.3 8.6Z" fill="#2fae5e"/></svg>
<svg style="left:1425px;top:1059px" width="16" height="18" viewBox="0 0 16 18"><ellipse cx="8" cy="10.5" rx="6.8" ry="6" fill="#111"/><ellipse cx="8" cy="5.2" rx="4.4" ry="4.6" fill="#111"/><ellipse cx="8" cy="12" rx="4" ry="4.4" fill="#fff"/><path d="M2.2 7.8 C5 9.6 11 9.6 13.8 7.8 L14.4 9.8 C11 11.6 5 11.6 1.6 9.8Z" fill="#ee2fa8"/><path d="M4.5 10.5 L6.2 10.8 L5.8 14 L4.4 13.2Z" fill="#ee2fa8"/><ellipse cx="6.5" cy="4.2" rx="1.1" ry="1.5" fill="#fff"/><ellipse cx="9.5" cy="4.2" rx="1.1" ry="1.5" fill="#fff"/><ellipse cx="8" cy="6.8" rx="2.4" ry="0.9" fill="#f5a623"/><ellipse cx="4.6" cy="16.6" rx="2.8" ry="1.1" fill="#f5a623"/><ellipse cx="11.4" cy="16.6" rx="2.8" ry="1.1" fill="#f5a623"/></svg>
<svg style="left:1449px;top:1059px" width="16" height="18" viewBox="0 0 16 18"><ellipse cx="8" cy="10.5" rx="6.8" ry="6" fill="#111"/><ellipse cx="8" cy="5.2" rx="4.4" ry="4.6" fill="#111"/><ellipse cx="8" cy="12" rx="4" ry="4.4" fill="#fff"/><path d="M2.2 7.8 C5 9.6 11 9.6 13.8 7.8 L14.4 9.8 C11 11.6 5 11.6 1.6 9.8Z" fill="#e5322a"/><path d="M4.5 10.5 L6.2 10.8 L5.8 14 L4.4 13.2Z" fill="#e5322a"/><ellipse cx="6.5" cy="4.2" rx="1.1" ry="1.5" fill="#fff"/><ellipse cx="9.5" cy="4.2" rx="1.1" ry="1.5" fill="#fff"/><ellipse cx="8" cy="6.8" rx="2.4" ry="0.9" fill="#f5a623"/><ellipse cx="4.6" cy="16.6" rx="2.8" ry="1.1" fill="#f5a623"/><ellipse cx="11.4" cy="16.6" rx="2.8" ry="1.1" fill="#f5a623"/></svg>
<svg style="left:1473px;top:1059px" width="16" height="18" viewBox="0 0 16 18"><ellipse cx="8" cy="10.5" rx="6.8" ry="6" fill="#111"/><ellipse cx="8" cy="5.2" rx="4.4" ry="4.6" fill="#111"/><ellipse cx="8" cy="12" rx="4" ry="4.4" fill="#fff"/><path d="M2.2 7.8 C5 9.6 11 9.6 13.8 7.8 L14.4 9.8 C11 11.6 5 11.6 1.6 9.8Z" fill="#e5322a"/><path d="M4.5 10.5 L6.2 10.8 L5.8 14 L4.4 13.2Z" fill="#e5322a"/><ellipse cx="6.5" cy="4.2" rx="1.1" ry="1.5" fill="#fff"/><ellipse cx="9.5" cy="4.2" rx="1.1" ry="1.5" fill="#fff"/><ellipse cx="8" cy="6.8" rx="2.4" ry="0.9" fill="#f5a623"/><ellipse cx="4.6" cy="16.6" rx="2.8" ry="1.1" fill="#f5a623"/><ellipse cx="11.4" cy="16.6" rx="2.8" ry="1.1" fill="#f5a623"/></svg>
<svg style="left:1497px;top:1059px" width="16" height="18" viewBox="0 0 16 18"><ellipse cx="8" cy="10.5" rx="6.8" ry="6" fill="#111"/><ellipse cx="8" cy="5.2" rx="4.4" ry="4.6" fill="#111"/><ellipse cx="8" cy="12" rx="4" ry="4.4" fill="#fff"/><path d="M2.2 7.8 C5 9.6 11 9.6 13.8 7.8 L14.4 9.8 C11 11.6 5 11.6 1.6 9.8Z" fill="#e5322a"/><path d="M4.5 10.5 L6.2 10.8 L5.8 14 L4.4 13.2Z" fill="#e5322a"/><ellipse cx="6.5" cy="4.2" rx="1.1" ry="1.5" fill="#fff"/><ellipse cx="9.5" cy="4.2" rx="1.1" ry="1.5" fill="#fff"/><ellipse cx="8" cy="6.8" rx="2.4" ry="0.9" fill="#f5a623"/><ellipse cx="4.6" cy="16.6" rx="2.8" ry="1.1" fill="#f5a623"/><ellipse cx="11.4" cy="16.6" rx="2.8" ry="1.1" fill="#f5a623"/></svg>
<svg style="left:1521px;top:1059px" width="16" height="18" viewBox="0 0 16 18"><ellipse cx="8" cy="10.5" rx="6.8" ry="6" fill="#111"/><ellipse cx="8" cy="5.2" rx="4.4" ry="4.6" fill="#111"/><ellipse cx="8" cy="12" rx="4" ry="4.4" fill="#fff"/><path d="M2.2 7.8 C5 9.6 11 9.6 13.8 7.8 L14.4 9.8 C11 11.6 5 11.6 1.6 9.8Z" fill="#ee2fa8"/><path d="M4.5 10.5 L6.2 10.8 L5.8 14 L4.4 13.2Z" fill="#ee2fa8"/><ellipse cx="6.5" cy="4.2" rx="1.1" ry="1.5" fill="#fff"/><ellipse cx="9.5" cy="4.2" rx="1.1" ry="1.5" fill="#fff"/><ellipse cx="8" cy="6.8" rx="2.4" ry="0.9" fill="#f5a623"/><ellipse cx="4.6" cy="16.6" rx="2.8" ry="1.1" fill="#f5a623"/><ellipse cx="11.4" cy="16.6" rx="2.8" ry="1.1" fill="#f5a623"/></svg>
<svg style="left:1545px;top:1059px" width="16" height="18" viewBox="0 0 16 18"><ellipse cx="8" cy="10.5" rx="6.8" ry="6" fill="#111"/><ellipse cx="8" cy="5.2" rx="4.4" ry="4.6" fill="#111"/><ellipse cx="8" cy="12" rx="4" ry="4.4" fill="#fff"/><path d="M2.2 7.8 C5 9.6 11 9.6 13.8 7.8 L14.4 9.8 C11 11.6 5 11.6 1.6 9.8Z" fill="#ee2fa8"/><path d="M4.5 10.5 L6.2 10.8 L5.8 14 L4.4 13.2Z" fill="#ee2fa8"/><ellipse cx="6.5" cy="4.2" rx="1.1" ry="1.5" fill="#fff"/><ellipse cx="9.5" cy="4.2" rx="1.1" ry="1.5" fill="#fff"/><ellipse cx="8" cy="6.8" rx="2.4" ry="0.9" fill="#f5a623"/><ellipse cx="4.6" cy="16.6" rx="2.8" ry="1.1" fill="#f5a623"/><ellipse cx="11.4" cy="16.6" rx="2.8" ry="1.1" fill="#f5a623"/></svg>
<svg style="left:1569px;top:1059px" width="16" height="18" viewBox="0 0 16 18"><ellipse cx="8" cy="10.5" rx="6.8" ry="6" fill="#111"/><ellipse cx="8" cy="5.2" rx="4.4" ry="4.6" fill="#111"/><ellipse cx="8" cy="12" rx="4" ry="4.4" fill="#fff"/><path d="M2.2 7.8 C5 9.6 11 9.6 13.8 7.8 L14.4 9.8 C11 11.6 5 11.6 1.6 9.8Z" fill="#e5322a"/><path d="M4.5 10.5 L6.2 10.8 L5.8 14 L4.4 13.2Z" fill="#e5322a"/><ellipse cx="6.5" cy="4.2" rx="1.1" ry="1.5" fill="#fff"/><ellipse cx="9.5" cy="4.2" rx="1.1" ry="1.5" fill="#fff"/><ellipse cx="8" cy="6.8" rx="2.4" ry="0.9" fill="#f5a623"/><ellipse cx="4.6" cy="16.6" rx="2.8" ry="1.1" fill="#f5a623"/><ellipse cx="11.4" cy="16.6" rx="2.8" ry="1.1" fill="#f5a623"/></svg>
<svg style="left:1593px;top:1059px" width="16" height="18" viewBox="0 0 16 18"><ellipse cx="8" cy="10.5" rx="6.8" ry="6" fill="#111"/><ellipse cx="8" cy="5.2" rx="4.4" ry="4.6" fill="#111"/><ellipse cx="8" cy="12" rx="4" ry="4.4" fill="#fff"/><path d="M2.2 7.8 C5 9.6 11 9.6 13.8 7.8 L14.4 9.8 C11 11.6 5 11.6 1.6 9.8Z" fill="#e5322a"/><path d="M4.5 10.5 L6.2 10.8 L5.8 14 L4.4 13.2Z" fill="#e5322a"/><ellipse cx="6.5" cy="4.2" rx="1.1" ry="1.5" fill="#fff"/><ellipse cx="9.5" cy="4.2" rx="1.1" ry="1.5" fill="#fff"/><ellipse cx="8" cy="6.8" rx="2.4" ry="0.9" fill="#f5a623"/><ellipse cx="4.6" cy="16.6" rx="2.8" ry="1.1" fill="#f5a623"/><ellipse cx="11.4" cy="16.6" rx="2.8" ry="1.1" fill="#f5a623"/></svg>
<svg style="left:1617px;top:1059px" width="16" height="18" viewBox="0 0 16 18"><ellipse cx="8" cy="10.5" rx="6.8" ry="6" fill="#111"/><ellipse cx="8" cy="5.2" rx="4.4" ry="4.6" fill="#111"/><ellipse cx="8" cy="12" rx="4" ry="4.4" fill="#fff"/><path d="M2.2 7.8 C5 9.6 11 9.6 13.8 7.8 L14.4 9.8 C11 11.6 5 11.6 1.6 9.8Z" fill="#e5322a"/><path d="M4.5 10.5 L6.2 10.8 L5.8 14 L4.4 13.2Z" fill="#e5322a"/><ellipse cx="6.5" cy="4.2" rx="1.1" ry="1.5" fill="#fff"/><ellipse cx="9.5" cy="4.2" rx="1.1" ry="1.5" fill="#fff"/><ellipse cx="8" cy="6.8" rx="2.4" ry="0.9" fill="#f5a623"/><ellipse cx="4.6" cy="16.6" rx="2.8" ry="1.1" fill="#f5a623"/><ellipse cx="11.4" cy="16.6" rx="2.8" ry="1.1" fill="#f5a623"/></svg>
<svg style="left:1641px;top:1059px" width="18" height="18" viewBox="0 0 18 18"><rect x="4.5" y="1.5" width="8" height="9" fill="#fff" stroke="#222" stroke-width="1.2"/><rect x="1.5" y="5.5" width="8" height="10" fill="#fff" stroke="#222" stroke-width="1.2"/><path d="M10 8.5 L16 12.5 L10 16.5Z" fill="#3fae49"/></svg>
<svg style="left:1665px;top:1059px" width="18" height="17" viewBox="0 0 18 17"><ellipse cx="6.5" cy="6" rx="6" ry="5.2" fill="#3fc45a"/><path d="M3 10 L2.5 12.5 L5.5 11Z" fill="#3fc45a"/><ellipse cx="11.5" cy="10.5" rx="5" ry="4.2" fill="#f2f2f2"/><path d="M14 14 L15 16 L12 14.5Z" fill="#f2f2f2"/></svg>
<svg style="left:1689px;top:1059px" width="17" height="17" viewBox="0 0 17 17"><g fill="none" stroke="#e8706a" stroke-width="1.3"><ellipse cx="8.5" cy="8.5" rx="7.2" ry="3.2"/><ellipse cx="8.5" cy="8.5" rx="7.2" ry="3.2" transform="rotate(60 8.5 8.5)"/><ellipse cx="8.5" cy="8.5" rx="7.2" ry="3.2" transform="rotate(120 8.5 8.5)"/></g><circle cx="8.5" cy="8.5" r="2" fill="#6a8ad8"/></svg>
<svg style="left:1713px;top:1059px" width="18" height="17" viewBox="0 0 18 17"><ellipse cx="6.5" cy="6" rx="6" ry="5.2" fill="#3fc45a"/><path d="M3 10 L2.5 12.5 L5.5 11Z" fill="#3fc45a"/><ellipse cx="11.5" cy="10.5" rx="5" ry="4.2" fill="#f2f2f2"/><path d="M14 14 L15 16 L12 14.5Z" fill="#f2f2f2"/></svg>
<svg style="left:1737px;top:1059px" width="18" height="18" viewBox="0 0 18 18"><rect x="3" y="1" width="1.6" height="4" fill="#555"/><rect x="7" y="1" width="1.6" height="4" fill="#555"/><path d="M1.5 5 L10 5 L10 10 L7.5 12.5 L7.5 16 L4 16 L4 12.5 L1.5 10Z" fill="#666"/><circle cx="12" cy="12" r="5" fill="#1f9a3a"/><path d="M9.5 12 L11.3 14 L14.6 10" fill="none" stroke="#fff" stroke-width="1.6"/></svg>
<svg style="left:1761px;top:1059px" width="17" height="17" viewBox="0 0 17 17"><path d="M2 2 L11 2 L14 5 L14 15 L2 15Z" fill="#c8dcf0"/><path d="M4 4 L9 4 L7 8 L9 12 L4 12" fill="none" stroke="#5a9ad8" stroke-width="1.6"/><rect x="9.5" y="8" width="2" height="7" fill="#e8e8e8"/><rect x="12.5" y="8" width="2" height="7" fill="#e8e8e8"/></svg>
<svg style="left:1785px;top:1058px" width="17" height="18" viewBox="0 0 17 18"><rect x="0.5" y="0.5" width="16" height="17" rx="1.5" fill="#1a1a1a"/><path d="M3 9 C5 5.5 10 5 13.5 7.5 C11 6.8 7 7.5 5.5 9.5 C7 11.5 10.5 12 13.5 10.5 C10.5 13.5 5 13 3 9Z" fill="#76b900"/><ellipse cx="8.5" cy="9.2" rx="2" ry="1.5" fill="#1a1a1a" stroke="#76b900" stroke-width="0.8"/></svg>
<svg style="left:1809px;top:1059px" width="18" height="18" viewBox="0 0 18 18"><path d="M1.5 6 L4.5 6 L8.5 2 L8.5 15 L4.5 11 L1.5 11Z" fill="#e8e8e8" stroke="#555" stroke-width="0.9"/><circle cx="12.5" cy="12" r="4" fill="#fff" stroke="#e0201a" stroke-width="1.7"/><path d="M9.8 9.4 L15.2 14.6" stroke="#e0201a" stroke-width="1.7"/></svg>
<svg style="left:1833px;top:1059px" width="18" height="18" viewBox="0 0 18 18"><rect x="5.5" y="4.5" width="11" height="9" fill="#b8b8b0" stroke="#555" stroke-width="1"/><rect x="8" y="14" width="6" height="1.2" fill="#555"/><rect x="6" y="15.5" width="10" height="1.5" fill="#777"/><path d="M1.5 1 L1.5 5 M5 1 L5 5" stroke="#444" stroke-width="1.2"/><path d="M0.8 4.5 L5.8 4.5 L5.8 8.5 L4 10 L4 13 L2.6 13 L2.6 10 L0.8 8.5Z" fill="#fff" stroke="#444" stroke-width="0.9"/></svg>
<div class="a u" style="left:1865px;top:1061px;color:#000">2:13</div>
<svg style="left:1900px;top:1059px" width="17" height="16" viewBox="0 0 17 16"><rect x="0.5" y="0.5" width="16" height="12" fill="#2f7fe0" stroke="#1a4a9a" stroke-width="1"/><rect x="2" y="8.5" width="13" height="2.5" fill="#16366e"/><path d="M2 2 L15 2 L15 5 C10 4 6 6 2 7.5Z" fill="#5aa6f2"/><rect x="5" y="13" width="7" height="2" fill="#888"/></svg>
<div class="a u" style="left:1372px;top:1027.5px;font-family:'Liberation Sans','Noto Sans CJK SC',sans-serif;font-size:37px;line-height:44px;height:44px;color:rgba(255,255,255,0.66);font-weight:300;transform:none">CSDN @B站计算机毕业设计大学</div>
</body></html>
